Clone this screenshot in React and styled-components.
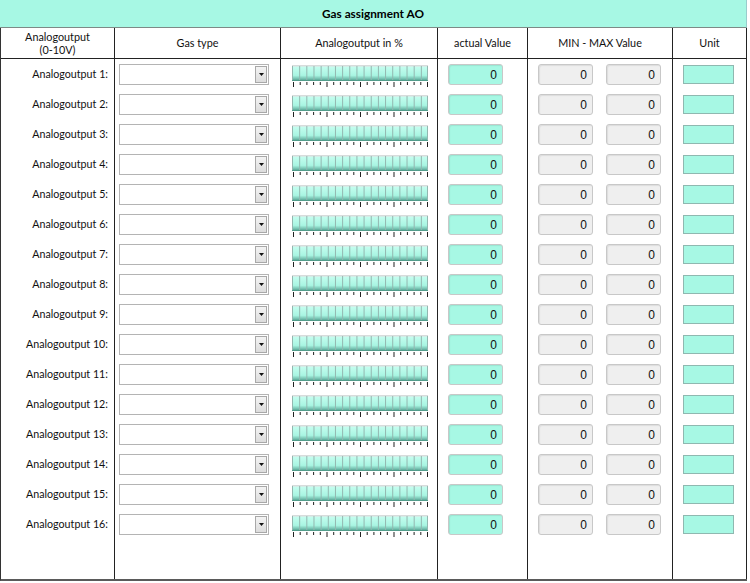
import React from 'react'
import styled, { createGlobalStyle } from 'styled-components'

const GlobalStyle = createGlobalStyle`
  html, body { margin: 0; padding: 0; background: #ffffff; }
  body { font-family: "Lato", "Open Sans", sans-serif; }
`

const TEAL = '#a7f8e4'

const rows = Array.from({ length: 16 }, (_, i) => i + 1)

function Bar() {
  const segs = 19
  const w = 136
  const step = w / segs
  const ticks = 21
  const tstep = (w - 2) / (ticks - 1)
  return (
    <svg width={w} height={23} viewBox={`0 0 ${w} 23`}>
      <defs>
        <linearGradient id="barfill" x1="0" y1="0" x2="0" y2="1">
          <stop offset="0" stopColor="#e6fffa" />
          <stop offset="0.15" stopColor="#c2fdee" />
          <stop offset="0.65" stopColor="#a9f5e2" />
          <stop offset="0.88" stopColor="#70bcac" />
          <stop offset="1" stopColor="#46917f" />
        </linearGradient>
      </defs>
      <rect x="0" y="0" width={w} height="16" fill="url(#barfill)" />
      <rect x="0" y="0" width={w} height="1.5" fill="#d8dcdc" />
      {Array.from({ length: segs + 1 }, (_, i) => (
        <rect key={i} x={Math.min(i * step, w - 1)} y="1" width="1" height="14" fill="#93b7b0" />
      ))}
      {Array.from({ length: ticks }, (_, i) => (
        <rect key={'t' + i} x={1 + i * tstep} y="17" width="1" height={i % 5 === 0 ? 5 : 3} fill="#222" />
      ))}
    </svg>
  )
}

function Combo() {
  return (
    <ComboBox>
      <ComboButton>
        <svg width="5" height="3" viewBox="0 0 5 3">
          <path d="M0 0 H5 L2.5 3 Z" fill="#111" />
        </svg>
      </ComboButton>
    </ComboBox>
  )
}

export default function App() {
  return (
    <>
      <GlobalStyle />
      <Frame>
        <Title>Gas assignment AO</Title>
        <Table>
          <HeadCell>Analogoutput<br />(0-10V)</HeadCell>
          <HeadCell>Gas type</HeadCell>
          <HeadCell>Analogoutput in %</HeadCell>
          <HeadCell>actual Value</HeadCell>
          <HeadCell>MIN - MAX Value</HeadCell>
          <HeadCell>Unit</HeadCell>

          {rows.map((n) => (
            <React.Fragment key={n}>
              <LabelCell>
                <Label>Analogoutput {n}:</Label>
              </LabelCell>
              <Cell $pad="0 0 0 4px">
                <Combo />
              </Cell>
              <Cell $pad="0 0 0 11px" $valign="flex-start">
                <Bar />
              </Cell>
              <Cell $pad="0 0 0 10px">
                <ValueBox $bg={TEAL}>0</ValueBox>
              </Cell>
              <Cell $pad="0 0 0 10px" $gap="13px">
                <ValueBox $bg="#efefef">0</ValueBox>
                <ValueBox $bg="#efefef">0</ValueBox>
              </Cell>
              <Cell $pad="0 0 0 10px">
                <UnitBox />
              </Cell>
            </React.Fragment>
          ))}

          <Filler />
          <Filler />
          <Filler />
          <Filler />
          <Filler />
          <Filler />
        </Table>
      </Frame>
    </>
  )
}

const Frame = styled.div`
  width: 747px;
  height: 581px;
  box-sizing: border-box;
  display: flex;
  flex-direction: column;
  border-left: 1px solid #333;
  border-bottom: 2px solid #5a5a5a;
`

const Title = styled.div`
  height: 28px;
  box-sizing: border-box;
  background: ${TEAL};
  border-bottom: 1px solid #7d8a86;
  border-right: 1px solid #9cc;
  display: flex;
  align-items: center;
  justify-content: center;
  font-family: "Lato", "Open Sans", sans-serif;
  font-weight: 700;
  font-size: 11.8px;
  color: #000;
  margin-left: -1px;
`

const Table = styled.div`
  flex: 1;
  display: grid;
  grid-template-columns: 114px 166px 157px 90px 145px 74px;
  grid-template-rows: 31px repeat(16, 30px) 1fr;
`

const HeadCell = styled.div`
  box-sizing: border-box;
  border-right: 1px solid #222;
  border-bottom: 1px solid #222;
  display: flex;
  align-items: center;
  justify-content: center;
  text-align: center;
  font-family: "Lato", "Open Sans", sans-serif;
  font-size: 10.8px;
  line-height: 13px;
  color: #111;
  padding-bottom: 1px;
`

const Cell = styled.div`
  box-sizing: border-box;
  border-right: 1px solid #222;
  display: flex;
  align-items: ${(p) => p.$valign || 'center'};
  justify-content: flex-start;
  padding: ${(p) => p.$pad || '0'};
  gap: ${(p) => p.$gap || '0'};
  padding-top: ${(p) => (p.$valign ? '6px' : '1px')};
`

const LabelCell = styled.div`
  box-sizing: border-box;
  border-right: 1px solid #222;
  display: flex;
  align-items: center;
  justify-content: flex-end;
  padding: 0 6px 2px 0;
`

const Filler = styled.div`
  border-right: 1px solid #222;
`

const Label = styled.span`
  font-family: "Lato", "Open Sans", sans-serif;
  font-size: 10.7px;
  color: #111;
  white-space: nowrap;
`

const ComboBox = styled.div`
  width: 150px;
  height: 21px;
  box-sizing: border-box;
  border: 1px solid #b4b4b4;
  background: #fff;
  display: flex;
  justify-content: flex-end;
  padding: 1px;
`

const ComboButton = styled.div`
  width: 12px;
  height: 17px;
  box-sizing: border-box;
  border: 1px solid #a8a8a8;
  background: linear-gradient(#f4f4f4, #dcdcdc);
  display: flex;
  align-items: center;
  justify-content: center;
`

const ValueBox = styled.div`
  width: 55px;
  height: 21px;
  box-sizing: border-box;
  border: 1px solid #c8c8c8;
  border-radius: 3px;
  background: ${(p) => p.$bg};
  box-shadow: inset 1px 1px 1px rgba(0, 0, 0, 0.08);
  display: flex;
  align-items: center;
  justify-content: flex-end;
  padding: 0 5px 0 0;
  font-family: "Liberation Sans", Arial, sans-serif;
  font-size: 12px;
  color: #111;
`

const UnitBox = styled.div`
  width: 51px;
  height: 19px;
  box-sizing: border-box;
  background: ${TEAL};
  border: 1px solid #8fb8b0;
`
